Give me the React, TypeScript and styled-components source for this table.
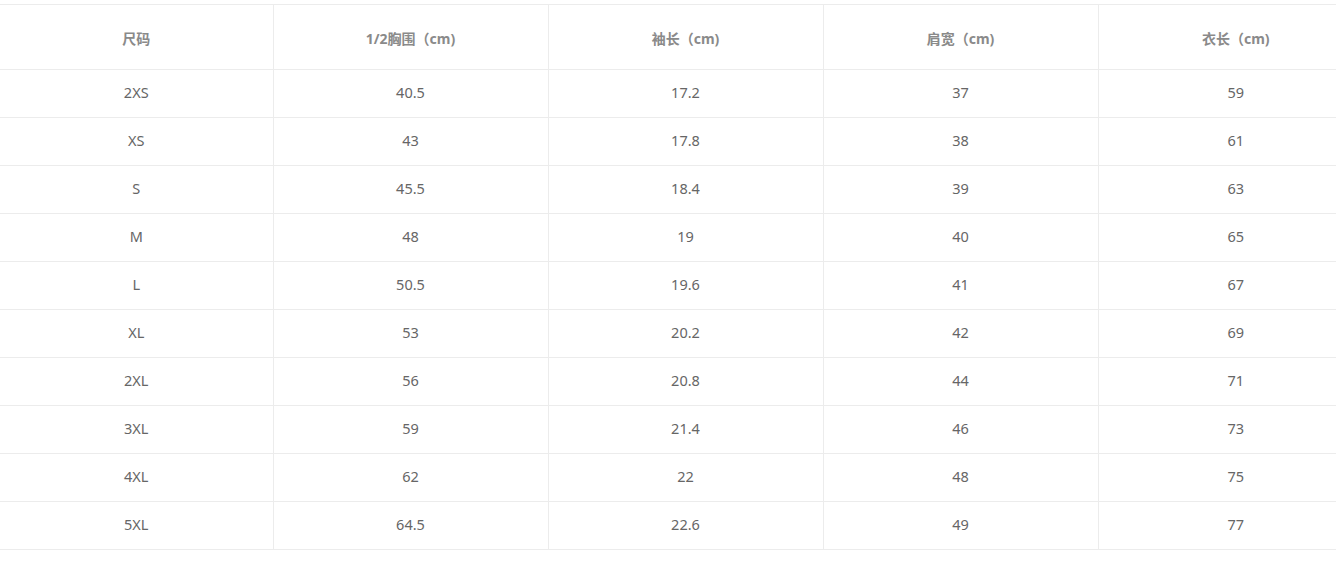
import styled, { createGlobalStyle } from 'styled-components';

const GlobalStyle = createGlobalStyle`
	html, body {
		margin: 0;
		padding: 0;
		background: #fff;
		overflow: hidden;
	}
	body {
		font-family: 'Noto Sans', 'Noto Sans CJK SC', sans-serif;
	}
`;

interface ISizeRow {
	size: string;
	chest: string;
	sleeve: string;
	shoulder: string;
	length: string;
}

const headers = ['尺码', '1/2胸围（cm)', '袖长（cm)', '肩宽（cm)', '衣长（cm)'];

const rows: ISizeRow[] = [
	{ size: '2XS', chest: '40.5', sleeve: '17.2', shoulder: '37', length: '59' },
	{ size: 'XS', chest: '43', sleeve: '17.8', shoulder: '38', length: '61' },
	{ size: 'S', chest: '45.5', sleeve: '18.4', shoulder: '39', length: '63' },
	{ size: 'M', chest: '48', sleeve: '19', shoulder: '40', length: '65' },
	{ size: 'L', chest: '50.5', sleeve: '19.6', shoulder: '41', length: '67' },
	{ size: 'XL', chest: '53', sleeve: '20.2', shoulder: '42', length: '69' },
	{ size: '2XL', chest: '56', sleeve: '20.8', shoulder: '44', length: '71' },
	{ size: '3XL', chest: '59', sleeve: '21.4', shoulder: '46', length: '73' },
	{ size: '4XL', chest: '62', sleeve: '22', shoulder: '48', length: '75' },
	{ size: '5XL', chest: '64.5', sleeve: '22.6', shoulder: '49', length: '77' },
];

const SizeChart = () => {
	return (
		<Wrapper>
			<Table>
				<colgroup>
					<Col $first />
					<Col />
					<Col />
					<Col />
					<Col />
				</colgroup>
				<thead>
					<tr>
						{headers.map(h => (
							<HeadCell key={h}>{h}</HeadCell>
						))}
					</tr>
				</thead>
				<tbody>
					{rows.map(row => (
						<tr key={row.size}>
							<Cell>{row.size}</Cell>
							<Cell>{row.chest}</Cell>
							<Cell>{row.sleeve}</Cell>
							<Cell>{row.shoulder}</Cell>
							<Cell>{row.length}</Cell>
						</tr>
					))}
				</tbody>
			</Table>
		</Wrapper>
	);
};

const Wrapper = styled.div`
	width: 1336px;
	padding-top: 4px;
	overflow: hidden;
`;

const Table = styled.table`
	width: 1373px;
	table-layout: fixed;
	border-collapse: collapse;
	border-top: 1px solid #ececec;
	border-bottom: 1px solid #ececec;
`;

const Col = styled.col<{ $first?: boolean }>`
	width: ${props => (props.$first ? '273px' : '275px')};
`;

const HeadCell = styled.th`
	height: 65px;
	padding: 2px 0 0;
	box-sizing: border-box;
	text-align: center;
	font-size: 14px;
	font-weight: 700;
	color: #8a8a8a;
	border-bottom: 1px solid #ececec;
	border-left: 1px solid #ececec;

	&:first-child {
		border-left: none;
	}
`;

const Cell = styled.td`
	height: 48px;
	padding: 0 0 3px;
	box-sizing: border-box;
	text-align: center;
	font-size: 14.5px;
	color: #666;
	border-bottom: 1px solid #ececec;
	border-left: 1px solid #ececec;

	&:first-child {
		border-left: none;
	}
`;

export default function App() {
	return (
		<>
			<GlobalStyle />
			<SizeChart />
		</>
	);
}
